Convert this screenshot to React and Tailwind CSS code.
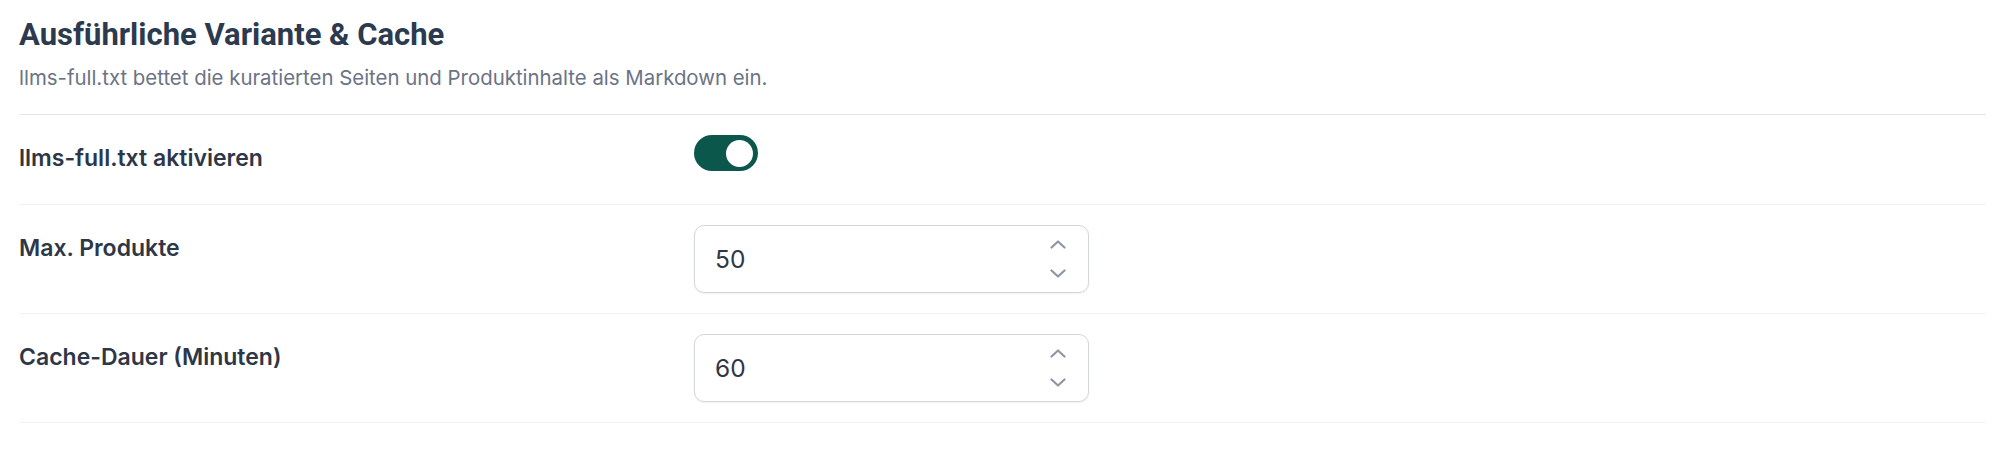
import React from "react";

function Chevrons() {
  return (
    <svg width="16" height="38" viewBox="0 0 16 38" fill="none" stroke="#8f96a3" strokeWidth="2.2" strokeLinecap="round" strokeLinejoin="round">
      <polyline points="1.5,7.5 8,1.5 14.5,7.5" />
      <polyline points="1.5,30.5 8,36.5 14.5,30.5" />
    </svg>
  );
}

function NumberField({ value }) {
  return (
    <div className="flex h-[68px] w-[395px] items-center justify-between rounded-[10px] border border-[#d4d7dc] bg-white pl-[20px] pr-[22px] shadow-[0_1px_2px_rgba(16,24,40,0.06)]">
      <span className="text-[24.5px] leading-none text-[#2f3746]">{value}</span>
      <Chevrons />
    </div>
  );
}

function Row({ label, children }) {
  return (
    <div className="flex items-start border-b border-[#f1f2f4] py-5">
      <div className="mt-[7px] w-[675px] shrink-0 text-[23px] font-semibold leading-[32px] text-[#2d3748]">
        {label}
      </div>
      <div className="flex-1">{children}</div>
    </div>
  );
}

export default function App() {
  return (
    <div className="min-h-[462px] w-full bg-white pl-[19px] pr-[22px]" style={{ fontFamily: "Inter, 'Noto Sans', sans-serif" }}>
      <div className="border-b border-[#e4e6ea] pb-[22px] pt-[15px]">
        <h2 className="text-[31px] font-bold leading-[40px] text-[#2c3a4f]" style={{ fontFamily: "Roboto, 'Liberation Sans', sans-serif" }}>
          Ausführliche Variante &amp; Cache
        </h2>
        <p className="mt-[9px] text-[20.4px] leading-[28px] text-[#6b7385]">
          llms-full.txt bettet die kuratierten Seiten und Produktinhalte als Markdown ein.
        </p>
      </div>

      <Row label="llms-full.txt aktivieren">
        <div className="h-[49px]">
          <div className="flex h-[36px] w-[64px] items-center justify-end rounded-full bg-[#0b574b] pr-[5px]">
            <div className="h-[27px] w-[27px] rounded-full bg-white" />
          </div>
        </div>
      </Row>

      <Row label="Max. Produkte">
        <NumberField value="50" />
      </Row>

      <Row label="Cache-Dauer (Minuten)">
        <NumberField value="60" />
      </Row>
    </div>
  );
}
